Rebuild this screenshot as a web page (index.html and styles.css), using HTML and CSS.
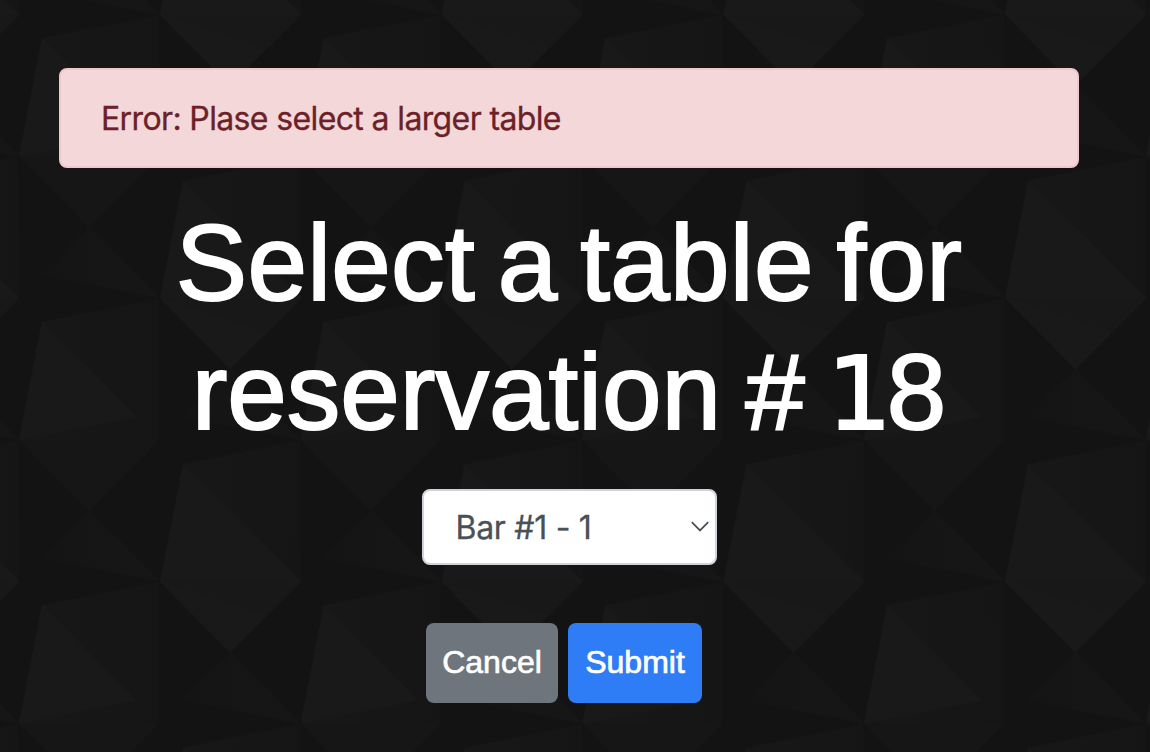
FILE: index.html
```html
<!DOCTYPE html>
<html lang="en">
<head>
<meta charset="utf-8">
<title>Select a table</title>
<link rel="stylesheet" href="styles.css">
</head>
<body>
<svg class="backdrop" width="1150" height="752" aria-hidden="true">
  <defs>
    <linearGradient id="fade-right" x1="0" y1="0" x2="1" y2="0"><stop offset=".3" stop-color="#171717"/><stop offset="1" stop-color="#151515"/></linearGradient>
    <linearGradient id="fade-left" x1="1" y1="0" x2="0" y2="0"><stop offset=".3" stop-color="#161616"/><stop offset="1" stop-color="#141414"/></linearGradient>
    <g id="facet-a">
      <path fill="url(#fade-right)" d="M23-117 140-141 141 0Z"/>
      <path fill="#191919" d="M0 0 23-117 141 0 70 71Z"/>
      <path fill="#181818" d="M0 0 141 0 106 35Z"/>
      <path fill="url(#fade-left)" d="M0 0-70-71-120-23Z"/>
    </g>
    <g id="facet-b">
      <path fill="url(#fade-right)" d="M0 0 23-118 140-141 140 0Z"/>
      <path fill="#191919" d="M0 0 23-118 117-23Z"/>
      <path fill="#161616" d="M0 0H140L70 71Z"/>
      <path fill="url(#fade-left)" d="M0 0-70-71-120-23Z"/>
    </g>
    <pattern id="facets" x="160" y="14.5" width="281.7" height="283.5" patternUnits="userSpaceOnUse">
      <rect width="282" height="284" fill="#131313"/>
      <use href="#facet-a"/>
      <use href="#facet-a" x="281.7"/>
      <use href="#facet-a" y="283.5"/>
      <use href="#facet-a" x="281.7" y="283.5"/>
      <use href="#facet-b" x="140.8" y="141.7"/>
    </pattern>
  </defs>
  <rect width="1150" height="752" fill="url(#facets)"/>
</svg>
<main class="page">
  <div class="alert" role="alert"><span class="alert-text">Error: Plase select a larger table</span></div>
  <h1 class="title"><span class="line line-first">Select a table for</span> <span class="line line-second">reservation # <span class="one">1</span>8</span></h1>
  <form class="form">
    <div class="select"><span class="select-text">Bar #1 - 1</span>
      <svg class="chevron" width="20" height="14" viewBox="0 0 20 14"><path d="M1.8 2.2 10 10.4l8.2-8.2" fill="none" stroke="#495057" stroke-width="1.8"/></svg>
    </div>
    <div class="actions">
      <button type="button" class="btn cancel"><span class="btn-text">Cancel</span></button>
      <button type="button" class="btn submit"><span class="btn-text">Submit</span></button>
    </div>
  </form>
</main>
</body>
</html>
```
FILE: styles.css
```css
* { box-sizing: border-box; }
body { margin: 0; background: #131313; overflow: hidden; }
.backdrop { position: absolute; inset: 0; z-index: -1; }
.page { width: 1150px; height: 752px; padding: 68px 71px 0 59px; }
.alert {
  height: 100px; padding: 0 40px; display: flex; align-items: center;
  background: #f3d7d9; border: 2px solid #f0c7ca; border-radius: 8px;
  color: #6b2127; font: 32px/48px Inter, sans-serif;
}
.alert-text { letter-spacing: -0.63px; white-space: nowrap; padding-top: 1px; -webkit-text-stroke: .3px; }
.title {
  margin: 31px 0 0; color: #fff; text-align: center;
  font: 400 107px/129px "Liberation Sans", sans-serif;
  -webkit-text-stroke: 2px #fff;
}
.line { display: block; white-space: nowrap; }
.line-first { letter-spacing: .3px; word-spacing: -7.3px; }
.line-second { word-spacing: -5.5px; }
.one { font-family: "DejaVu Sans", sans-serif; font-size: 102px; margin: 0 -5px 0 -2px; }
.form { display: flex; flex-direction: column; align-items: center; margin-top: 31px; }
.select {
  width: 295px; height: 76px; padding: 0 5px 0 32px; display: flex; align-items: center; justify-content: space-between;
  background: #fff; border: 2px solid #ced4da; border-radius: 8px;
  color: #495057; font: 32px/48px Inter, sans-serif;
}
.select-text { letter-spacing: -.3px; padding-top: 2px; -webkit-text-stroke: .3px; }
.actions { display: flex; gap: 10px; margin: 58px 10px 0 0; }
.btn {
  height: 80px; padding: 0 0 3px; border: 0; border-radius: 8px; color: #fff;
  font: 32px/48px "Liberation Sans", sans-serif; -webkit-text-stroke: .7px #fff;
}
.cancel { width: 132px; background: #6e757c; }
.submit { width: 134px; background: #2f7df6; }
```
